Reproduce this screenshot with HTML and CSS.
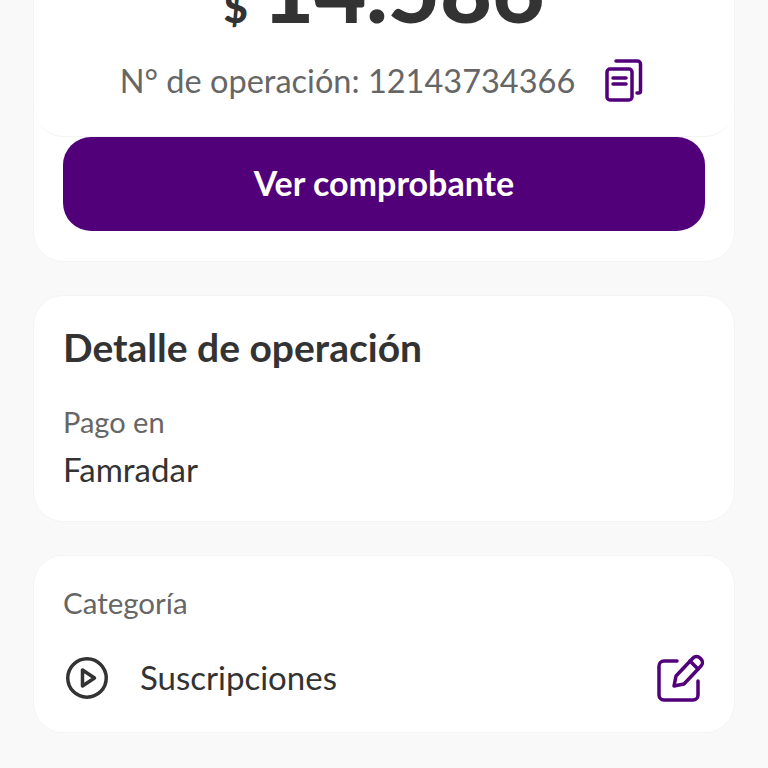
FILE: index.html
```html
<!DOCTYPE html>
<html lang="es">
<head>
  <meta charset="UTF-8">
  <meta name="viewport" content="width=device-width, initial-scale=1.0">
  <title>Detalle de operación</title>
  <link rel="stylesheet" href="styles.css">
</head>
<body>
  <article class="pageContainer">
    <section class="card receiptCard">
      <div class="receiptTop">
        <p class="amount"><span class="amountSign">$</span>14.586</p>
        <div class="operationRow">
          <span class="operationText">N° de operación: 12143734366</span>
          <svg class="copyIcon" width="38" height="44" viewBox="0 0 38 44" fill="none" stroke="#52007a" stroke-width="3.500" stroke-linecap="round" stroke-linejoin="round">
            <path d="M11 3h21.500a3 3 0 0 1 3 3v27a2 2 0 0 1-2 2h-1.500"/>
            <rect x="2" y="11" width="25" height="31" rx="3"/>
            <path d="M8 20h13M8 26h13"/>
          </svg>
        </div>
      </div>
      <button class="receiptBtn">Ver comprobante</button>
    </section>

    <section class="card detailCard">
      <h2 class="detailTitle">Detalle de operación</h2>
      <p class="fieldLabel">Pago en</p>
      <p class="fieldValue">Famradar</p>
    </section>

    <section class="card categoryCard">
      <p class="fieldLabel">Categoría</p>
      <div class="categoryRow">
        <svg class="playIcon" width="42" height="42" viewBox="0 0 42 42" fill="none" stroke="#333" stroke-width="3.500" stroke-linejoin="round">
          <circle cx="21" cy="21" r="19.250"/>
          <path d="M16.500 13v16l12-8z"/>
        </svg>
        <span class="categoryName">Suscripciones</span>
        <svg class="editIcon" width="48" height="48" viewBox="0 0 48 48" fill="none" stroke="#52007a" stroke-width="3.500" stroke-linecap="round" stroke-linejoin="round">
          <path d="M20 7H7a5 5 0 0 0-5 5v29a5 5 0 0 0 5 5h29a5 5 0 0 0 5-5V27"/>
          <path d="M17 32l2-10L36 4a5 5 0 0 1 7 0l1 1a5 5 0 0 1 0 7L27 30z"/>
          <path d="M33 7l8 8"/>
        </svg>
      </div>
    </section>
  </article>
</body>
</html>
```

FILE: styles.css
```css
html, body {
  height: 100%;
}

body {
  margin: 0;
  overflow: hidden;
  background-color: #f9f9f9;
  font-family: "Lato", "Open Sans", sans-serif;
  color: #333;
}

p, h2 {
  margin: 0;
}

.pageContainer {
  display: flex;
  flex-direction: column;
  gap: 33px;
  height: 768px;
  padding: 0 33px;
  box-sizing: border-box;
}

.card {
  background-color: #fff;
  border: 1px solid #f4f4f4;
  border-radius: 30px;
  flex-shrink: 0;
}

.receiptCard {
  height: 362px;
  margin-top: -100px;
  box-sizing: border-box;
}

.receiptTop {
  height: 236px;
  box-sizing: border-box;
  border-bottom: 1px solid #f4f4f4;
  border-radius: 0 0 30px 30px;
  text-align: center;
}

.amount {
  height: 157px;
  line-height: 175px;
  font-size: 90px;
  font-weight: 900;
}

.amountSign {
  margin-right: 14px;
  font-size: 42px;
}

.operationRow {
  display: flex;
  justify-content: center;
  align-items: center;
  gap: 30px;
  height: 44px;
  margin-right: 5px;
}

.operationText {
  font-size: 32.500px;
  color: #666;
}

.receiptBtn {
  display: block;
  width: 642px;
  height: 94px;
  margin: 0 auto;
  padding-bottom: 4px;
  border: 0;
  border-radius: 28px;
  background-color: #52007a;
  color: #fff;
  font-family: inherit;
  font-size: 34px;
  font-weight: 700;
}

.detailCard {
  height: 227px;
  box-sizing: border-box;
  padding: 27px 29px;
}

.detailTitle {
  font-size: 39px;
  line-height: 48px;
  font-weight: 700;
}

.fieldLabel {
  font-size: 29px;
  line-height: 36px;
  color: #666;
}

.detailCard .fieldLabel {
  margin-top: 33px;
}

.fieldValue {
  margin-top: 11px;
  font-size: 33px;
  line-height: 36px;
}

.categoryCard {
  height: 178px;
  box-sizing: border-box;
  padding: 29px 29px;
}

.categoryCard .fieldLabel {
  font-size: 29.500px;
}

.categoryRow {
  display: flex;
  align-items: center;
  margin-top: 33px;
}

.playIcon {
  margin-left: 3px;
}

.categoryName {
  flex: 1;
  margin-left: 32px;
  font-size: 33px;
  line-height: 40px;
  padding-bottom: 2px;
}
```
